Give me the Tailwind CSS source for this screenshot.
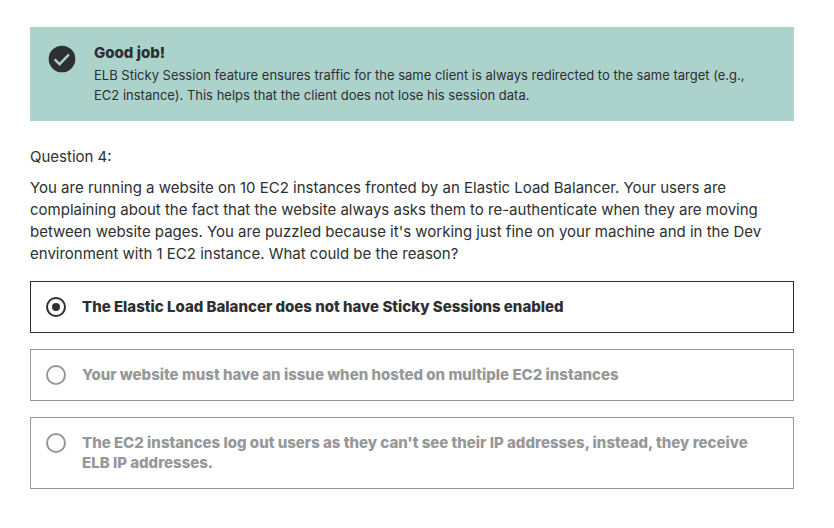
<!DOCTYPE html>
<html lang="en">
<head>
<meta charset="utf-8">
<meta name="viewport" content="width=device-width, initial-scale=1">
<title>Question 4</title>
<script src="https://cdn.jsdelivr.net/npm/@tailwindcss/browser@4"></script>
</head>
<body class="bg-white font-['Inter','Liberation_Sans',sans-serif] text-[#2d2f31]">
<main class="pt-[27px] pr-10 pb-10 pl-[30px]">
  <section role="status" class="flex gap-4 bg-[#acd2cc] p-4">
    <svg class="size-8 shrink-0" viewBox="0 0 24 24" aria-hidden="true"><circle cx="12" cy="12" r="10" fill="#2d2f31"/><path d="M6.500 12.300l3.700 3.600 7-7.300" fill="none" stroke="#acd2cc" stroke-width="1.800"/></svg>
    <div class="flex flex-col gap-0.5">
      <h2 class="text-[15px] leading-5 font-extrabold">Good job!</h2>
      <p class="text-[13px] leading-5">ELB Sticky Session feature ensures traffic for the same client is always redirected to the same target (e.g.,<br>EC2 instance). This helps that the client does not lose his session data.</p>
    </div>
  </section>
  <form>
    <fieldset>
      <legend class="pt-6 text-[15px] leading-6">Question 4:</legend>
      <p class="mt-2 text-[15px] leading-[22px]">You are running a website on 10 EC2 instances fronted by an Elastic Load Balancer. Your users are<br>complaining about the fact that the website always asks them to re-authenticate when they are moving<br>between website pages. You are puzzled because it's working just fine on your machine and in the Dev<br>environment with 1 EC2 instance. What could be the reason?</p>
      <div class="mt-4 flex flex-col gap-4 text-[15px] leading-5 font-extrabold">
        <label class="flex gap-4 border border-[#2d2f31] p-[15px]">
          <input type="radio" name="answer" checked class="grid size-5 shrink-0 appearance-none place-items-center rounded-full border-2 border-current before:size-2 before:rounded-full checked:before:bg-current">
          <span>The Elastic Load Balancer does not have Sticky Sessions enabled</span>
        </label>
        <label class="flex gap-4 border border-[#969798] p-[15px] text-[#969798]">
          <input type="radio" name="answer" disabled class="grid size-5 shrink-0 appearance-none place-items-center rounded-full border-2 border-current before:size-2 before:rounded-full checked:before:bg-current">
          <span>Your website must have an issue when hosted on multiple EC2 instances</span>
        </label>
        <label class="flex gap-4 border border-[#969798] p-[15px] text-[#969798]">
          <input type="radio" name="answer" disabled class="grid size-5 shrink-0 appearance-none place-items-center rounded-full border-2 border-current before:size-2 before:rounded-full checked:before:bg-current">
          <span>The EC2 instances log out users as they can't see their IP addresses, instead, they receive<br>ELB IP addresses.</span>
        </label>
      </div>
    </fieldset>
  </form>
</main>
</body>
</html>
